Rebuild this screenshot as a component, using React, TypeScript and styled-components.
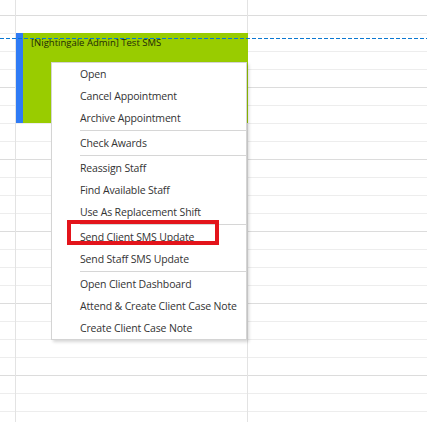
import React from 'react';
import styled, { createGlobalStyle } from 'styled-components';

const uiFont = `"Open Sans", "Noto Sans", "Liberation Sans", sans-serif`;

const GlobalStyle = createGlobalStyle`
  html, body {
    margin: 0;
    padding: 0;
    background: #ffffff;
  }
  body {
    font-family: ${uiFont};
  }
`;

const SLOT_COUNT = 24;

const CalendarBase = styled.div`
  position: relative;
  display: flex;
  width: 427px;
  height: 422px;
  overflow: hidden;
  background: #ffffff;
`;

const Column = styled.div<{ $width?: number; $divider?: boolean }>`
  position: relative;
  display: flex;
  flex-direction: column;
  flex: ${(p) => (p.$width ? `0 0 ${p.$width}px` : '1 1 auto')};
  box-sizing: border-box;
  border-right: ${(p) => (p.$divider ? '1px solid #e3e3e3' : 'none')};
`;

const Slot = styled.div<{ $hour: boolean; $first?: boolean }>`
  flex: 0 0 auto;
  box-sizing: border-box;
  height: ${(p) => (p.$first ? 16 : 18)}px;
  border-bottom: 1px solid ${(p) => (p.$hour ? '#dcdcdc' : '#ededed')};
`;

const Appointment = styled.div`
  position: absolute;
  top: 33px;
  left: 0;
  right: -1px;
  height: 90px;
  display: flex;
  background: #99cc00;
  z-index: 1;
`;

const AppointmentBar = styled.div`
  flex: 0 0 7px;
  background: #2f7bf5;
`;

const AppointmentTitle = styled.div`
  padding: 3px 0 0 8px;
  font-size: 9.5px;
  line-height: 13px;
  color: #1d2a08;
  white-space: nowrap;
`;

const NowLine = styled.div`
  position: absolute;
  top: 38px;
  left: 0;
  right: 0;
  height: 1px;
  background: repeating-linear-gradient(
    to right,
    #0a78d2 0,
    #0a78d2 4px,
    transparent 4px,
    transparent 6px
  );
  z-index: 2;
`;

const Menu = styled.ul`
  position: absolute;
  top: 62px;
  left: 51px;
  width: 196px;
  box-sizing: border-box;
  margin: 0;
  padding: 0;
  list-style: none;
  background: #ffffff;
  border: 1px solid #d4d4d4;
  box-shadow: 2px 2px 3px rgba(0, 0, 0, 0.16);
  z-index: 3;
`;

const MenuItem = styled.li`
  height: 22px;
  padding-left: 28px;
  display: flex;
  align-items: center;
  font-size: 10.5px;
  letter-spacing: -0.15px;
  color: #333333;
  white-space: nowrap;
  cursor: default;
`;

const MenuSeparator = styled.li`
  height: 1px;
  margin: 1px 0 1px 28px;
  background: #d6d6d6;
`;

const Highlight = styled.div`
  position: absolute;
  top: 220px;
  left: 67px;
  width: 152px;
  height: 25px;
  box-sizing: border-box;
  border: 4px solid #e3141b;
  pointer-events: none;
  z-index: 4;
`;

const menuGroups: string[][] = [
  ['Open', 'Cancel Appointment', 'Archive Appointment'],
  ['Check Awards'],
  ['Reassign Staff', 'Find Available Staff', 'Use As Replacement Shift'],
  ['Send Client SMS Update', 'Send Staff SMS Update'],
  ['Open Client Dashboard', 'Attend & Create Client Case Note', 'Create Client Case Note'],
];

const Slots: React.FC = () => (
  <>
    {Array.from({ length: SLOT_COUNT }, (_, i) => (
      <Slot key={i} $first={i === 0} $hour={i % 4 === 0} />
    ))}
  </>
);

const ContextMenu: React.FC = () => (
  <Menu>
    {menuGroups.map((group, gi) => (
      <React.Fragment key={gi}>
        {gi > 0 && <MenuSeparator />}
        {group.map((label) => (
          <MenuItem key={label}>{label}</MenuItem>
        ))}
      </React.Fragment>
    ))}
  </Menu>
);

export default function App() {
  return (
    <>
      <GlobalStyle />
      <CalendarBase>
        <Column $width={16} $divider>
          <Slots />
        </Column>
        <Column $width={232} $divider>
          <Slots />
          <Appointment>
            <AppointmentBar />
            <AppointmentTitle>[Nightingale Admin] Test SMS</AppointmentTitle>
          </Appointment>
        </Column>
        <Column>
          <Slots />
        </Column>
        <NowLine />
        <ContextMenu />
        <Highlight />
      </CalendarBase>
    </>
  );
}
